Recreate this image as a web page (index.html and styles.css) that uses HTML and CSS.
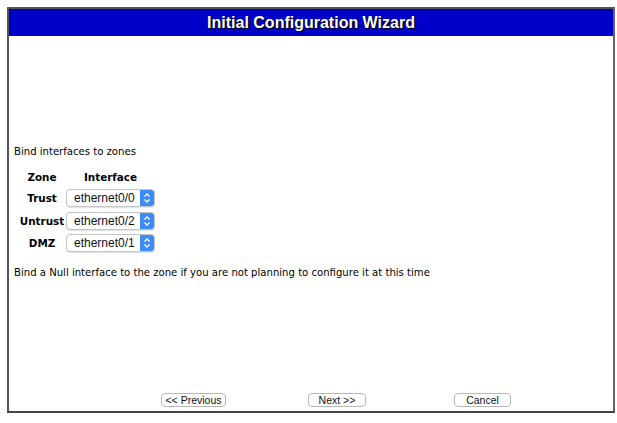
FILE: index.html
```html
<!DOCTYPE html>
<html lang="en">

<head>
    <meta charset="UTF-8">
    <title>Initial Configuration Wizard</title>
    <link rel="stylesheet" href="styles.css">
</head>

<body>
    <div class="wizard">
        <div class="wizard-title">Initial Configuration Wizard</div>
        <div class="wizard-body">
            <p class="note first">Bind interfaces to zones</p>
            <div class="zones">
                <span class="head">Zone</span>
                <span class="head">Interface</span>

                <span class="zone">Trust</span>
                <div class="picker">
                    <select>
                        <option selected>ethernet0/0</option>
                        <option>ethernet0/1</option>
                        <option>ethernet0/2</option>
                        <option>Null</option>
                    </select>
                    <span class="stepper"><svg width="8" height="12" viewBox="0 0 8 12"><path d="M1.5 4.5 4 2l2.5 2.5M1.5 7.5 4 10l2.5-2.5" fill="none" stroke="#fff" stroke-width="1.4"/></svg></span>
                </div>

                <span class="zone">Untrust</span>
                <div class="picker">
                    <select>
                        <option>ethernet0/0</option>
                        <option>ethernet0/1</option>
                        <option selected>ethernet0/2</option>
                        <option>Null</option>
                    </select>
                    <span class="stepper"><svg width="8" height="12" viewBox="0 0 8 12"><path d="M1.5 4.5 4 2l2.5 2.5M1.5 7.5 4 10l2.5-2.5" fill="none" stroke="#fff" stroke-width="1.4"/></svg></span>
                </div>

                <span class="zone">DMZ</span>
                <div class="picker">
                    <select>
                        <option>ethernet0/0</option>
                        <option selected>ethernet0/1</option>
                        <option>ethernet0/2</option>
                        <option>Null</option>
                    </select>
                    <span class="stepper"><svg width="8" height="12" viewBox="0 0 8 12"><path d="M1.5 4.5 4 2l2.5 2.5M1.5 7.5 4 10l2.5-2.5" fill="none" stroke="#fff" stroke-width="1.4"/></svg></span>
                </div>
            </div>
            <p class="note">Bind a Null interface to the zone if you are not planning to configure it at this time</p>
        </div>
        <div class="buttons">
            <button class="btn btn-prev">&lt;&lt; Previous</button>
            <button class="btn btn-next">Next &gt;&gt;</button>
            <button class="btn btn-cancel">Cancel</button>
        </div>
    </div>
</body>

</html>
```

FILE: styles.css
```css
* {
    padding: 0;
    margin: 0;
    box-sizing: border-box;
}

body {
    background-color: #fff;
    font-family: "DejaVu Sans", Verdana, sans-serif;
    color: #000;
}

.wizard {
    margin: 7px 0 0 7px;
    width: 608px;
    height: 406px;
    border: 2px solid #555;
    border-right-color: #666;
    border-bottom-color: #444;
    display: flex;
    flex-direction: column;
}

.wizard-title {
    height: 27px;
    background-color: #0000c8;
    color: #fff;
    font: bold 16px/27px "Liberation Sans", Arial, sans-serif;
    text-align: center;
    text-shadow: 0 0 1px #000, 1px 1px 1px #000;
}

.wizard-body {
    flex: 1;
    padding: 110px 0 0 5px;
}

.note {
    font-size: 10.1px;
    line-height: 12px;
}

.zones {
    display: grid;
    grid-template-columns: 48px 89px;
    grid-template-rows: 20px;
    grid-auto-rows: 22.5px;
    column-gap: 0;
    align-items: center;
    justify-items: center;
    margin: 9px 0 12px 4px;
}

.head,
.zone {
    font-size: 10.4px;
    font-weight: bold;
}

.picker {
    width: 89px;
    height: 18px;
    display: flex;
    border: 1px solid #c4c4c4;
    border-radius: 4px;
    overflow: hidden;
    background-color: #fff;
    box-shadow: 0 1px 0 #e4e4e4;
}

.picker select {
    flex: 1;
    min-width: 0;
    appearance: none;
    border: none;
    outline: none;
    background: transparent;
    font: 12px/16px "Liberation Sans", Arial, sans-serif;
    color: #111;
    padding-left: 7px;
}

.stepper {
    width: 14px;
    display: flex;
    align-items: center;
    justify-content: center;
    background-color: #3b8cf6;
}

.buttons {
    display: flex;
    align-items: center;
    height: 22px;
    padding-bottom: 1px;
}

.btn {
    height: 14px;
    border: 1px solid #b9b9b9;
    border-radius: 4px;
    background-color: #fff;
    font: 10.5px/12px "Liberation Sans", Arial, sans-serif;
    color: #111;
}

.btn-prev {
    width: 65px;
    margin-left: 152px;
}

.btn-next {
    width: 58px;
    margin-left: 82px;
}

.btn-cancel {
    width: 57px;
    margin-left: 88px;
}
```
